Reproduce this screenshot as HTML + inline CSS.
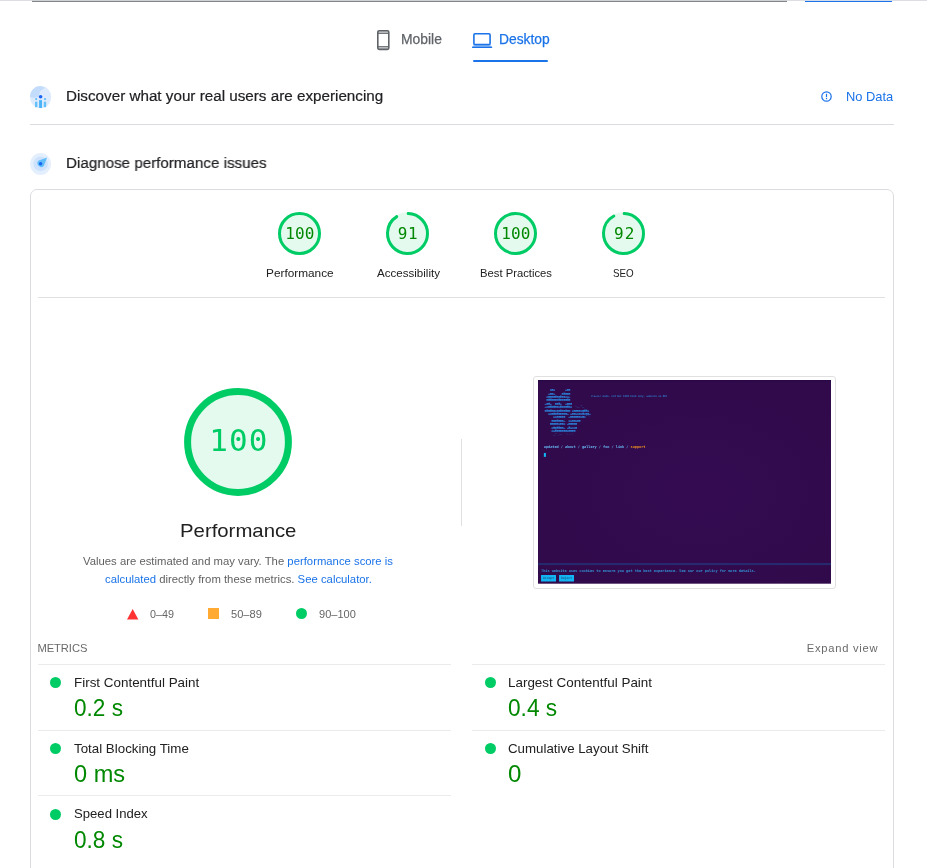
<!DOCTYPE html>
<html lang="en">
<head>
<meta charset="utf-8">
<title>PageSpeed Insights</title>
<style>
html,body{margin:0;padding:0;background:#fff;}
body{width:927px;height:868px;position:relative;overflow:hidden;font-family:"Liberation Sans",sans-serif;}
.t{position:absolute;white-space:nowrap;line-height:1;margin:0;padding:0;transform-origin:0 0;}
.a{position:absolute;}
.ln{position:absolute;height:1px;background:#ebebeb;}
.dot{position:absolute;width:11.4px;height:11.4px;border-radius:50%;background:#00cc66;}
svg{position:absolute;overflow:visible;}
#page{position:absolute;left:0;top:0;width:927px;height:868px;overflow:hidden;will-change:transform;}
</style>
</head>
<body>
<div id="page">
<!-- top edge: header border, url input bottom, analyze button bottom -->
<div class="a" style="left:0;top:0;width:927px;height:1px;background:#dcdee1"></div>
<div class="a" style="left:31.6px;top:0;width:755.6px;height:1px;background:#cfd1d4"></div>
<div class="a" style="left:31.6px;top:1px;width:755.6px;height:1px;background:#83878c"></div>
<div class="a" style="left:804.6px;top:0;width:87.4px;height:1px;background:#d3dcea"></div>
<div class="a" style="left:804.6px;top:1px;width:87.4px;height:1px;background:#1a73e8"></div>

<!-- tabs -->
<svg style="left:377px;top:30px" width="12.6" height="20.2" viewBox="0 0 12.6 20.2"><rect x=".8" y=".8" width="11" height="18.6" rx="1.3" fill="none" stroke="#5f6368" stroke-width="1.6"/><rect x=".8" y="1.4" width="11" height="2.4" fill="#5f6368" opacity=".45"/><rect x=".8" y="16.4" width="11" height="2.4" fill="#5f6368" opacity=".45"/><rect x=".8" y="3.1" width="11" height=".8" fill="#5f6368"/><rect x=".8" y="16.2" width="11" height=".8" fill="#5f6368"/></svg>
<svg style="left:471.6px;top:32.9px" width="20.2" height="15.2" viewBox="0 0 20.2 15.2"><rect x="1.9" y=".8" width="16.2" height="10.8" rx="1.1" fill="none" stroke="#1a73e8" stroke-width="1.6"/><rect x="1.1" y="12.4" width="18" height="1.2" fill="#1a73e8" opacity=".45"/><rect x="0" y="13.6" width="20.2" height="1.4" rx=".4" fill="#1a73e8"/></svg>
<div class="a" style="left:473px;top:60px;width:75px;height:2px;background:#1a73e8;border-radius:1px"></div>

<!-- section 1 -->
<svg style="left:30px;top:86px" width="21.2" height="22.2" viewBox="0 0 21 22">
 <ellipse cx="10.5" cy="11" rx="10.5" ry="11" fill="#deebfe"/>
 <path d="M0 11 A10.5 11 0 0 1 10.5 0 L14.9 1.7 L10 5.1 L8.5 11 L3.7 11.9 Z" fill="#c3dcfc"/>
 <rect x="5" y="15.6" width="2.3" height="5.4" fill="#62bff9"/>
 <rect x="13.7" y="15.6" width="2.3" height="5.4" fill="#62bff9"/>
 <rect x="9" y="14" width="2.9" height="7.8" fill="#4db3f8"/>
 <circle cx="6.1" cy="13" r="1.1" fill="#62bff9"/><circle cx="14.9" cy="13" r="1.1" fill="#62bff9"/>
 <circle cx="10.5" cy="10.7" r="1.8" fill="#1a66f2"/>
</svg>
<svg style="left:821px;top:91.3px" width="11" height="11" viewBox="0 0 11 11"><circle cx="5.5" cy="5.5" r="4.7" fill="none" stroke="#1a73e8" stroke-width="1.2"/><rect x="4.9" y="2.8" width="1.2" height="3.4" fill="#1a73e8"/><rect x="4.9" y="7" width="1.2" height="1.2" fill="#1a73e8"/></svg>
<div class="a" style="left:30px;top:124px;width:864px;height:1px;background:#dadce0"></div>

<!-- section 2 -->
<svg style="left:30px;top:153px" width="21.2" height="22" viewBox="0 0 21 22">
 <ellipse cx="10.5" cy="11" rx="10.5" ry="11" fill="#e4effe"/>
 <circle cx="10.5" cy="10.9" r="7.3" fill="#cfe2fd"/>
 <path d="M17 4.5 L13.7 13 A3.7 3.7 0 1 1 8.6 7.6 Z" fill="#62bef9"/>
 <circle cx="10.5" cy="10.8" r="1.75" fill="#1a66f2"/>
</svg>

<!-- card -->
<div class="a" style="left:30px;top:189px;width:862px;height:720px;border:1px solid #dadce0;border-radius:7px"></div>
<div class="a" style="left:38px;top:297px;width:847px;height:1px;background:#e0e0e0"></div>

<!-- small gauges -->
<svg style="left:278.2px;top:212px" width="43" height="43" viewBox="0 0 43 43"><circle cx="21.5" cy="21.5" r="21.4" fill="#e5faef"/><circle cx="21.5" cy="21.5" r="20" fill="none" stroke="#00cc66" stroke-width="3"/></svg>
<svg style="left:386px;top:212px" width="43" height="43" viewBox="0 0 43 43"><circle cx="21.5" cy="21.5" r="21.4" fill="#e5faef"/><circle cx="21.5" cy="21.5" r="20" fill="none" stroke="#00cc66" stroke-width="3" stroke-linecap="round" stroke-dasharray="112.85 125.66" transform="rotate(-88 21.5 21.5)"/></svg>
<svg style="left:494.2px;top:212px" width="43" height="43" viewBox="0 0 43 43"><circle cx="21.5" cy="21.5" r="21.4" fill="#e5faef"/><circle cx="21.5" cy="21.5" r="20" fill="none" stroke="#00cc66" stroke-width="3"/></svg>
<svg style="left:602px;top:212px" width="43" height="43" viewBox="0 0 43 43"><circle cx="21.5" cy="21.5" r="21.4" fill="#e5faef"/><circle cx="21.5" cy="21.5" r="20" fill="none" stroke="#00cc66" stroke-width="3" stroke-linecap="round" stroke-dasharray="114.1 125.66" transform="rotate(-88 21.5 21.5)"/></svg>

<!-- big gauge -->
<svg style="left:184.3px;top:388px" width="108" height="108" viewBox="0 0 108 108"><circle cx="54" cy="54" r="53.8" fill="#e5faef"/><circle cx="54" cy="54" r="50.4" fill="none" stroke="#00cc66" stroke-width="7"/></svg>
<div class="a" style="left:461px;top:439px;width:1px;height:87px;background:#e0e0e0"></div>

<!-- legend shapes -->
<svg style="left:127px;top:608.5px" width="11.4" height="10.6" viewBox="0 0 11.4 10.6"><path d="M5.7 0 L11.4 10.6 L0 10.6 Z" fill="#ff3333"/></svg>
<div class="a" style="left:208px;top:608px;width:11px;height:11px;background:#ffaa33"></div>
<div class="dot" style="left:295.8px;top:607.8px"></div>

<!-- screenshot -->
<div class="a" style="left:533px;top:376px;width:301px;height:211px;border:1px solid #e0e0e0;border-radius:3px;background:#fff"></div>
<svg style="left:538px;top:380.4px" width="293" height="203.7" viewBox="0 0 1350 938" preserveAspectRatio="none" font-family="'DejaVu Sans Mono','Liberation Mono',monospace" text-rendering="geometricPrecision">
<defs><radialGradient id="bg" cx="55%" cy="55%" r="60%"><stop offset="0" stop-color="#340b51"/><stop offset="1" stop-color="#300a4b"/></radialGradient><filter id="bl" x="-2%" y="-10%" width="104%" height="120%"><feGaussianBlur stdDeviation="1.7"/></filter></defs>
<rect width="1350" height="938" fill="url(#bg)"/>
<rect width="1350" height="5" fill="#2a0845"/>
<g font-size="13" fill="#2b85dd" opacity=".9" filter="url(#bl)" style="white-space:pre">
<text x="0" y="46.5" xml:space="preserve">       ▃▄▃      ▂▄▄</text>
<text x="0" y="62.2" xml:space="preserve">      ▂▄▄▂    ▄▅▄▄▄</text>
<text x="0" y="78.0" xml:space="preserve">     ▃▄▄▄▄▅▄▄▅▄▄▃▃▂</text>
<text x="0" y="93.8" xml:space="preserve">     ▄▅▅▄▄▄▄▅▄▄▄▄▅▄</text>
<text x="0" y="109.5" xml:space="preserve">    ▂▄▅▂  ▄▄▅▂  ▂▄▄▄</text>
<text x="0" y="125.2" xml:space="preserve">    ▂▃▄▅▄▅▄▄▃▅▄▄▄▅▄▃  ~__^_</text>
<text x="0" y="141.0" xml:space="preserve">    ▄▅▄▅▄▄▃▄▄▅▄▄▅▄▄ ▃▄▄▄▄▃▄▅▅▃</text>
<text x="0" y="156.8" xml:space="preserve">      ▃▃▄▅▄▅▄▄▄▄▄▂ ▂▄▄▃▃▄▃▅▃▄▄▂</text>
<text x="0" y="172.5" xml:space="preserve">         ▃▃▄▄▄▄▄  ▂▄▄▄▄▄▄▃▄▃""-</text>
<text x="0" y="188.2" xml:space="preserve">        ▄▄▄▅▄▄▄▂  ▃▃▄▄▃▄▄</text>
<text x="0" y="204.0" xml:space="preserve">       ▄▄▄▄▄▃▄▄▃ ▂▄▄▄▄▄</text>
<text x="0" y="219.8" xml:space="preserve">        ▃▅▄▅▅▄▄▂ ▂▅▃▃▃▄</text>
<text x="0" y="235.5" xml:space="preserve">        ▃▃▅▄▄▄▄▄▄▃▄▄▄▄</text>
<text x="0" y="251.2" xml:space="preserve">         _"_-~  '---'</text>
</g>
<g filter="url(#bl)">
<text x="243" y="78" font-size="12" font-weight="bold" fill="#2f8fe0" opacity=".8" textLength="352">classic mode, old but 1998 kind only, website on RSS</text>
<text x="27" y="311" font-size="16.5" font-weight="bold" fill="#6cc4ff" opacity=".9" textLength="468">updated / about / gallery / foo / link / <tspan fill="#ff9d1e">support</tspan></text>
<text x="14" y="883" font-size="16.5" font-weight="bold" fill="#35aef0" opacity=".8" textLength="990">This website uses cookies to ensure you get the best experience. See our our policy for more details.</text>
</g>
<rect x="27" y="336" width="9.5" height="18" fill="#12b5f5"/>
<rect x="0" y="845.4" width="1350" height="4.6" fill="#1a58a0" opacity=".85"/>
<rect x="14" y="898" width="69" height="30" fill="#13b4f3"/><rect x="97" y="898" width="69" height="30" fill="#13b4f3"/>
<text x="48.5" y="918" font-size="14" font-weight="bold" fill="#1a5a8c" text-anchor="middle">Accept</text><text x="131.5" y="918" font-size="14" font-weight="bold" fill="#1a5a8c" text-anchor="middle">Reject</text>
</svg>

<!-- metric lines + dots -->
<div class="ln" style="left:38px;top:664px;width:413px"></div>
<div class="ln" style="left:472px;top:664px;width:413px"></div>
<div class="ln" style="left:38px;top:730px;width:413px"></div>
<div class="ln" style="left:472px;top:730px;width:413px"></div>
<div class="ln" style="left:38px;top:795px;width:413px"></div>
<div class="dot" style="left:49.8px;top:676.8px"></div>
<div class="dot" style="left:49.8px;top:742.8px"></div>
<div class="dot" style="left:49.8px;top:808.7px"></div>
<div class="dot" style="left:484.6px;top:676.8px"></div>
<div class="dot" style="left:484.6px;top:742.8px"></div>

<div class="t" style="left:400.68px;top:32.00px;font-family:'Liberation Sans',sans-serif;font-size:14px;color:#5f6368;transform:scaleX(0.9915);-webkit-text-stroke:0.25px;">Mobile</div>
<div class="t" style="left:498.50px;top:32.00px;font-family:'Liberation Sans',sans-serif;font-size:14px;color:#1a73e8;transform:scaleX(0.9866);-webkit-text-stroke:0.25px;">Desktop</div>
<div class="t" style="left:65.72px;top:88.00px;font-family:'Liberation Sans',sans-serif;font-size:15.3px;color:#202124;transform:scaleX(0.9950);-webkit-text-stroke:0.2px;">Discover what your real users are experiencing</div>
<div class="t" style="left:845.63px;top:90.00px;font-family:'Liberation Sans',sans-serif;font-size:13px;color:#1a73e8;transform:scaleX(0.9914);">No Data</div>
<div class="t" style="left:65.74px;top:155.00px;font-family:'Liberation Sans',sans-serif;font-size:15.3px;color:#202124;transform:scaleX(0.9911);-webkit-text-stroke:0.2px;">Diagnose performance issues</div>
<div class="t" style="left:265.52px;top:268.00px;font-family:'Liberation Sans',sans-serif;font-size:11.5px;color:#212121;transform:scaleX(1.0278);">Performance</div>
<div class="t" style="left:376.64px;top:268.00px;font-family:'Liberation Sans',sans-serif;font-size:11.5px;color:#212121;transform:scaleX(1.0056);">Accessibility</div>
<div class="t" style="left:479.55px;top:268.00px;font-family:'Liberation Sans',sans-serif;font-size:11.5px;color:#212121;transform:scaleX(0.9785);">Best Practices</div>
<div class="t" style="left:612.62px;top:268.00px;font-family:'Liberation Sans',sans-serif;font-size:11.5px;color:#212121;transform:scaleX(0.8536);">SEO</div>
<div class="t" style="left:285.33px;top:226.00px;font-family:'DejaVu Sans Mono','Liberation Mono',monospace;font-size:16px;color:#008800;letter-spacing:0.021px;">100</div>
<div class="t" style="left:397.87px;top:226.00px;font-family:'DejaVu Sans Mono','Liberation Mono',monospace;font-size:16px;color:#008800;letter-spacing:0.625px;">91</div>
<div class="t" style="left:501.33px;top:226.00px;font-family:'DejaVu Sans Mono','Liberation Mono',monospace;font-size:16px;color:#008800;letter-spacing:0.021px;">100</div>
<div class="t" style="left:614.03px;top:226.00px;font-family:'DejaVu Sans Mono','Liberation Mono',monospace;font-size:16px;color:#008800;letter-spacing:1.090px;">92</div>
<div class="t" style="left:209.13px;top:425.00px;font-family:'DejaVu Sans Mono','Liberation Mono',monospace;font-size:31px;color:#00cc66;letter-spacing:1.151px;">100</div>
<div class="t" style="left:179.58px;top:522.00px;font-family:'Liberation Sans',sans-serif;font-size:18.6px;color:#212121;transform:scaleX(1.0939);">Performance</div>
<div class="t" style="left:82.80px;top:556.00px;font-family:'Liberation Sans',sans-serif;font-size:11.2px;color:#616161;transform:scaleX(1.0111);">Values are estimated and may vary. The <a href="#" style="color:#1a73e8;text-decoration:none">performance score is</a></div>
<div class="t" style="left:104.59px;top:574.00px;font-family:'Liberation Sans',sans-serif;font-size:11.2px;color:#616161;transform:scaleX(1.0123);"><a href="#" style="color:#1a73e8;text-decoration:none">calculated</a> directly from these metrics. <a href="#" style="color:#1a73e8;text-decoration:none">See calculator.</a></div>
<div class="t" style="left:149.82px;top:609.00px;font-family:'Liberation Sans',sans-serif;font-size:11.2px;color:#666666;transform:scaleX(0.9630);">0–49</div>
<div class="t" style="left:230.98px;top:609.00px;font-family:'Liberation Sans',sans-serif;font-size:11.2px;color:#666666;transform:scaleX(0.9913);">50–89</div>
<div class="t" style="left:318.93px;top:609.00px;font-family:'Liberation Sans',sans-serif;font-size:11.2px;color:#666666;transform:scaleX(0.9851);">90–100</div>
<div class="t" style="left:37.38px;top:643.00px;font-family:'Liberation Sans',sans-serif;font-size:11.2px;color:#6a6a6a;letter-spacing:-0.058px;">METRICS</div>
<div class="t" style="left:806.86px;top:643.00px;font-family:'Liberation Sans',sans-serif;font-size:11.2px;color:#6a6a6a;letter-spacing:0.720px;">Expand view</div>
<div class="t" style="left:73.58px;top:677.00px;font-family:'Liberation Sans',sans-serif;font-size:12.9px;color:#212121;transform:scaleX(1.0406);">First Contentful Paint</div>
<div class="t" style="left:73.54px;top:696.00px;font-family:'Liberation Sans',sans-serif;font-size:24px;color:#008800;transform:scaleX(0.9403);">0.2 s</div>
<div class="t" style="left:73.60px;top:743.00px;font-family:'Liberation Sans',sans-serif;font-size:12.9px;color:#212121;transform:scaleX(1.0341);">Total Blocking Time</div>
<div class="t" style="left:73.63px;top:762.00px;font-family:'Liberation Sans',sans-serif;font-size:24px;color:#008800;transform:scaleX(0.9811);">0 ms</div>
<div class="t" style="left:73.63px;top:808.00px;font-family:'Liberation Sans',sans-serif;font-size:12.9px;color:#212121;transform:scaleX(1.0175);">Speed Index</div>
<div class="t" style="left:73.54px;top:828.00px;font-family:'Liberation Sans',sans-serif;font-size:24px;color:#008800;transform:scaleX(0.9403);">0.8 s</div>
<div class="t" style="left:507.73px;top:677.00px;font-family:'Liberation Sans',sans-serif;font-size:12.9px;color:#212121;transform:scaleX(1.0414);">Largest Contentful Paint</div>
<div class="t" style="left:507.74px;top:696.00px;font-family:'Liberation Sans',sans-serif;font-size:24px;color:#008800;transform:scaleX(0.9443);">0.4 s</div>
<div class="t" style="left:507.76px;top:743.00px;font-family:'Liberation Sans',sans-serif;font-size:12.9px;color:#212121;transform:scaleX(1.0317);">Cumulative Layout Shift</div>
<div class="t" style="left:507.85px;top:762.00px;font-family:'Liberation Sans',sans-serif;font-size:24px;color:#008800;transform:scaleX(1.0028);">0</div>
</div>
</body>
</html>
